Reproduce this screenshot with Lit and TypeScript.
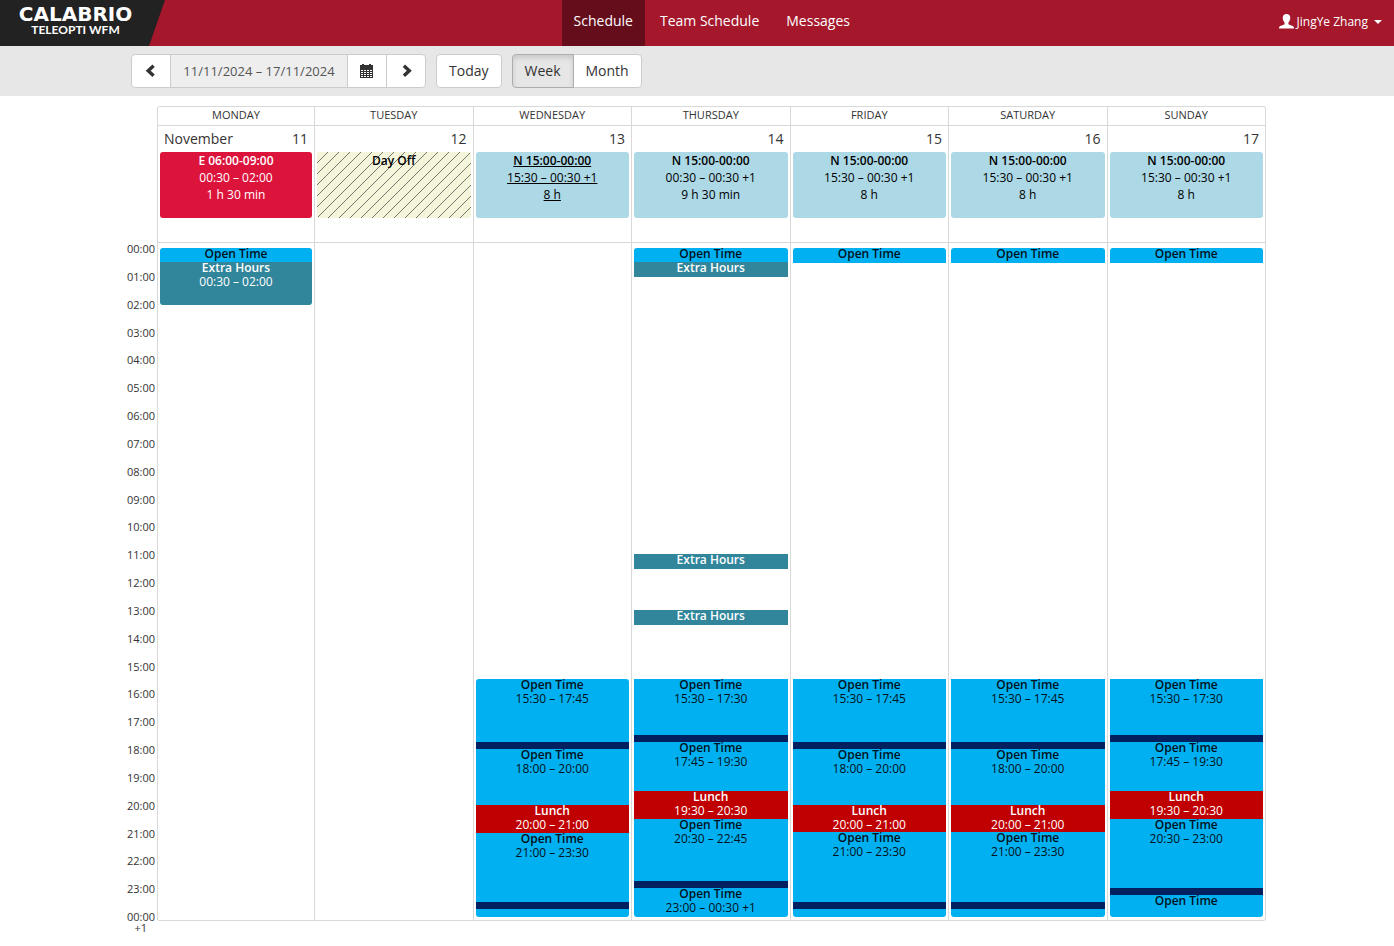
import { LitElement, html, css, nothing } from "lit";
import { customElement, property } from "lit/decorators.js";
import { classMap } from "lit/directives/class-map.js";
import { styleMap } from "lit/directives/style-map.js";

type Kind = "open" | "extra" | "break" | "lunch";

interface Activity {
  kind: Kind;
  /** Quarter-hour index from midnight, 0 to 96. */
  from: number;
  to: number;
  name?: string;
  span?: string;
}

interface Day {
  weekday: string;
  date: number;
  month?: string;
  shift: "early" | "night" | "off";
  hovered?: boolean;
  lines: string[];
  activities: Activity[];
}

const at = (time: string) => {
  const [h, m] = time.split(":").map(Number);
  return h * 4 + m / 15;
};

const act = (kind: Kind, from: string, to: string, name?: string, span?: string): Activity => ({
  kind,
  from: at(from),
  to: at(to),
  name,
  span,
});

const open = (from: string, to: string, span?: string) => act("open", from, to, "Open Time", span);
const extra = (from: string, to: string, span?: string) => act("extra", from, to, "Extra Hours", span);
const lunch = (from: string, to: string) => act("lunch", from, to, "Lunch", `${from} – ${to}`);
const pause = (from: string, to: string) => act("break", from, to);

const eveningLate = () => [
  open("15:30", "17:45", "15:30 – 17:45"),
  pause("17:45", "18:00"),
  open("18:00", "20:00", "18:00 – 20:00"),
  lunch("20:00", "21:00"),
  open("21:00", "23:30", "21:00 – 23:30"),
  pause("23:30", "23:45"),
  act("open", "23:45", "24:00"),
];

const eveningEarly = () => [
  open("15:30", "17:30", "15:30 – 17:30"),
  pause("17:30", "17:45"),
  open("17:45", "19:30", "17:45 – 19:30"),
  lunch("19:30", "20:30"),
];

const nightLines = ["N 15:00-00:00", "15:30 – 00:30 +1", "8 h"];

const DAYS: Day[] = [
  {
    weekday: "Monday", date: 11, month: "November", shift: "early",
    lines: ["E 06:00-09:00", "00:30 – 02:00", "1 h 30 min"],
    activities: [open("0:00", "0:30"), extra("0:30", "2:00", "00:30 – 02:00")],
  },
  { weekday: "Tuesday", date: 12, shift: "off", lines: ["Day Off"], activities: [] },
  {
    weekday: "Wednesday", date: 13, shift: "night", hovered: true,
    lines: nightLines, activities: eveningLate(),
  },
  {
    weekday: "Thursday", date: 14, shift: "night",
    lines: ["N 15:00-00:00", "00:30 – 00:30 +1", "9 h 30 min"],
    activities: [
      open("0:00", "0:30"),
      extra("0:30", "1:00"),
      extra("11:00", "11:30"),
      extra("13:00", "13:30"),
      ...eveningEarly(),
      open("20:30", "22:45", "20:30 – 22:45"),
      pause("22:45", "23:00"),
      open("23:00", "24:00", "23:00 – 00:30 +1"),
    ],
  },
  {
    weekday: "Friday", date: 15, shift: "night", lines: nightLines,
    activities: [open("0:00", "0:30"), ...eveningLate()],
  },
  {
    weekday: "Saturday", date: 16, shift: "night", lines: nightLines,
    activities: [open("0:00", "0:30"), ...eveningLate()],
  },
  {
    weekday: "Sunday", date: 17, shift: "night", lines: nightLines,
    activities: [
      open("0:00", "0:30"),
      ...eveningEarly(),
      open("20:30", "23:00", "20:30 – 23:00"),
      pause("23:00", "23:15"),
      open("23:15", "24:00"),
    ],
  },
];

const HOURS = Array.from({ length: 24 }, (_, h) => `${String(h).padStart(2, "0")}:00`);

@customElement("app-header")
class AppHeader extends LitElement {
  static styles = css`
    :host { display: block; }
    .bar {
      display: flex;
      justify-content: space-between;
      align-items: stretch;
      height: 46px;
      background: #a5182c;
      color: #fff;
    }
    .brand {
      box-sizing: border-box;
      width: 165px;
      padding: 5px 14px 0 0;
      background: #222;
      clip-path: polygon(0 0, 100% 0, 149px 100%, 0 100%);
      color: #fff;
      text-align: center;
      text-decoration: none;
    }
    .name {
      display: block;
      font: 700 20px/18px "DejaVu Sans", sans-serif;
    }
    .product {
      display: block;
      font: 700 12px/13px Lato, sans-serif;
    }
    .nav { display: flex; gap: 3px; }
    .tab {
      padding: 0 12px;
      font-size: 14px;
      font-weight: 500;
      line-height: 42px;
      color: #fff;
      text-decoration: none;
    }
    .current { background: #650d1b; }
    .user {
      display: flex;
      align-items: center;
      gap: 3px;
      padding: 0 12px 3px 20px;
      border: 0;
      background: none;
      color: #fff;
      font: 500 12px/18px "Open Sans", sans-serif;
    }
    .caret {
      margin-left: 3px;
      border: 4px solid transparent;
      border-top-color: #fff;
      border-bottom: 0;
    }
  `;

  render() {
    return html`
      <header class="bar">
        <a class="brand" href="#home">
          <span class="name">CALABRIO</span>
          <span class="product">TELEOPTI WFM</span>
        </a>
        <nav class="nav">
          <a class="tab current" href="#schedule" aria-current="page">Schedule</a>
          <a class="tab" href="#team">Team Schedule</a>
          <a class="tab" href="#messages">Messages</a>
        </nav>
        <button class="user" type="button">
          <svg width="15" height="15" viewBox="0 0 14 14" fill="currentColor" aria-hidden="true">
            <path d="M7 0C4.800 0 3.500 1.400 3.500 3.500c0 1.900.7 3.500 1.700 4.400v1.200c0 .5-.3.800-.9 1L1.200 11.300C.4 11.700 0 12.200 0 12.900V13.500h14v-.6c0-.7-.4-1.200-1.200-1.600L9.700 10.100c-.6-.2-.9-.5-.9-1V7.900c1-.9 1.700-2.500 1.700-4.400C10.500 1.400 9.200 0 7 0z"/>
          </svg>
          <span>JingYe Zhang</span>
          <span class="caret"></span>
        </button>
      </header>
    `;
  }
}

@customElement("schedule-toolbar")
class ScheduleToolbar extends LitElement {
  static styles = css`
    :host { display: block; background: #e7e7e7; }
    .row {
      box-sizing: border-box;
      display: flex;
      gap: 10px;
      max-width: 1170px;
      margin: 0 auto;
      padding: 8px 19px;
    }
    .group { display: flex; }
    .btn, .range {
      box-sizing: border-box;
      height: 34px;
      margin: 0;
      border: 1px solid #ccc;
      font: 400 14px/20px "Open Sans", sans-serif;
      color: #333;
    }
    .btn {
      display: flex;
      align-items: center;
      justify-content: center;
      padding: 0 12px;
      border-radius: 4px;
      background: #fff;
    }
    .icon { width: 40px; padding: 0; }
    .range {
      width: 178px;
      padding: 0;
      border-radius: 0;
      background: #eee;
      color: #555;
      font-size: 13px;
      text-align: center;
    }
    .group > * + * { margin-left: -1px; }
    .group > :not(:first-child) { border-top-left-radius: 0; border-bottom-left-radius: 0; }
    .group > :not(:last-child) { border-top-right-radius: 0; border-bottom-right-radius: 0; }
    .pressed {
      z-index: 1;
      border-color: #adadad;
      background: #e6e6e6;
      box-shadow: inset 0 3px 5px rgba(0, 0, 0, 0.125);
    }
  `;

  render() {
    return html`
      <div class="row">
        <div class="group">
          <button class="btn icon" type="button" aria-label="Previous week">
            <svg width="14" height="14" viewBox="0 0 14 14" aria-hidden="true">
              <path d="M9.600 1.800 4.200 6.800l5.400 5" fill="none" stroke="#333" stroke-width="3.400"/>
            </svg>
          </button>
          <input class="range" type="text" readonly aria-label="Selected week" .value=${"11/11/2024 – 17/11/2024"} />
          <button class="btn icon" type="button" aria-label="Pick a date">
            <svg width="14" height="14" viewBox="0 0 14 14" aria-hidden="true">
              <path fill="#333" d="M2 0h2v1h5V0h2v1h2v4H0V1h2zM0 5h13v9H0z"/>
              <path fill="none" stroke="#fff" stroke-width="1" stroke-dasharray="2 1" d="M1 6.500h11M1 8.500h11M1 10.500h11M1 12.500h11"/>
            </svg>
          </button>
          <button class="btn icon" type="button" aria-label="Next week">
            <svg width="14" height="14" viewBox="0 0 14 14" aria-hidden="true">
              <path d="M4.900 1.800 10.300 6.800l-5.400 5" fill="none" stroke="#333" stroke-width="3.400"/>
            </svg>
          </button>
        </div>
        <button class="btn" type="button">Today</button>
        <div class="group">
          <button class="btn pressed" type="button" aria-pressed="true">Week</button>
          <button class="btn" type="button" aria-pressed="false">Month</button>
        </div>
      </div>
    `;
  }
}

@customElement("day-column")
class DayColumn extends LitElement {
  @property({ attribute: false }) day!: Day;

  static styles = css`
    :host { display: block; border-left: 1px solid #d9d9d9; }
    .weekday {
      padding-bottom: 2px;
      border-bottom: 1px solid #d9d9d9;
      font-size: 11px;
      line-height: 16px;
      text-align: center;
      text-transform: uppercase;
    }
    .date {
      display: flex;
      justify-content: space-between;
      padding: 0 6px;
      font-size: 14px;
      font-weight: 500;
      line-height: 26px;
    }
    .number { margin-left: auto; }
    .shift {
      box-sizing: border-box;
      display: block;
      height: 66px;
      margin: 0 2px 24px;
      border-radius: 3px;
      color: #000;
      font-size: 12px;
      line-height: 17px;
      text-align: center;
      text-decoration: none;
    }
    .line { display: block; }
    .line:first-child { font-weight: 600; }
    .early { background: #dc143c; color: #fff; }
    .night { background: #add8e6; }
    .off {
      background: linear-gradient(135deg, transparent 46%, #77776b 46%, #77776b 54%, transparent 54%) 0 0 / 11px 11px #f5f5dc;
    }
    .hovered { text-decoration: underline; }
    .timeline {
      display: grid;
      grid-template-rows: repeat(96, minmax(0, 1fr));
      height: 668px;
      padding: 5px 2px 4px;
      border-top: 1px solid #d9d9d9;
    }
    .activity {
      grid-column: 1;
      min-height: 0;
      margin-bottom: -1px;
      color: #001020;
      font-size: 12px;
      line-height: 14px;
      text-align: center;
    }
    .activity:first-child { border-top-left-radius: 3px; border-top-right-radius: 3px; }
    .activity:last-child { border-bottom-left-radius: 3px; border-bottom-right-radius: 3px; }
    .open { background: #00b0f0; }
    .extra { background: #31869b; color: #fff; }
    .lunch { background: #c00000; color: #fff; }
    .break { background: #002060; }
    .title { font-weight: 600; }
    .label { margin-top: -1px; }
  `;

  render() {
    const { weekday, date, month, shift, hovered, lines, activities } = this.day;
    return html`
      <div class="weekday">${weekday}</div>
      <div class="date">
        ${month ? html`<span>${month}</span>` : nothing}
        <span class="number">${date}</span>
      </div>
      <a class=${classMap({ shift: true, [shift]: true, hovered: !!hovered })} href="#day-${date}">
        ${lines.map((line) => html`<span class="line">${line}</span>`)}
      </a>
      <div class="timeline">
        ${activities.map((a) => html`<div
          class=${classMap({ activity: true, [a.kind]: true })}
          style=${styleMap({ gridRow: `${a.from + 1} / ${a.to + 1}` })}
        >${a.name ? html`<div class="label">
            <div class="title">${a.name}</div>
            ${a.span ? html`<div>${a.span}</div>` : nothing}
          </div>` : nothing}</div>`)}
      </div>
    `;
  }
}

@customElement("app-root")
class AppRoot extends LitElement {
  static styles = css`
    :host {
      display: block;
      min-height: 100vh;
      background: #fff;
      color: #333;
      font-family: "Open Sans", sans-serif;
    }
    .planner {
      box-sizing: border-box;
      display: flex;
      align-items: flex-start;
      max-width: 1170px;
      margin: 0 auto;
      padding: 10px 16px 0 0;
    }
    .axis {
      box-sizing: border-box;
      flex: none;
      width: 45px;
      padding: 137px 2px 0 0;
      font-size: 11px;
      line-height: 11px;
      text-align: right;
    }
    .hours {
      display: grid;
      grid-template-rows: repeat(24, minmax(0, 1fr));
      height: 668px;
    }
    .next-day {
      display: block;
      padding-right: 8px;
    }
    .week {
      flex: 1;
      min-width: 0;
      display: grid;
      grid-template-columns: minmax(0, 314fr) repeat(6, minmax(0, 317fr));
      border: 1px solid #d9d9d9;
      border-left: 0;
      border-radius: 3px;
    }
  `;

  render() {
    return html`
      <app-header></app-header>
      <schedule-toolbar></schedule-toolbar>
      <main class="planner">
        <div class="axis">
          <div class="hours">${HOURS.map((h) => html`<span>${h}</span>`)}</div>
          <div>00:00<span class="next-day">+1</span></div>
        </div>
        <div class="week">
          ${DAYS.map((day) => html`<day-column .day=${day}></day-column>`)}
        </div>
      </main>
    `;
  }
}
